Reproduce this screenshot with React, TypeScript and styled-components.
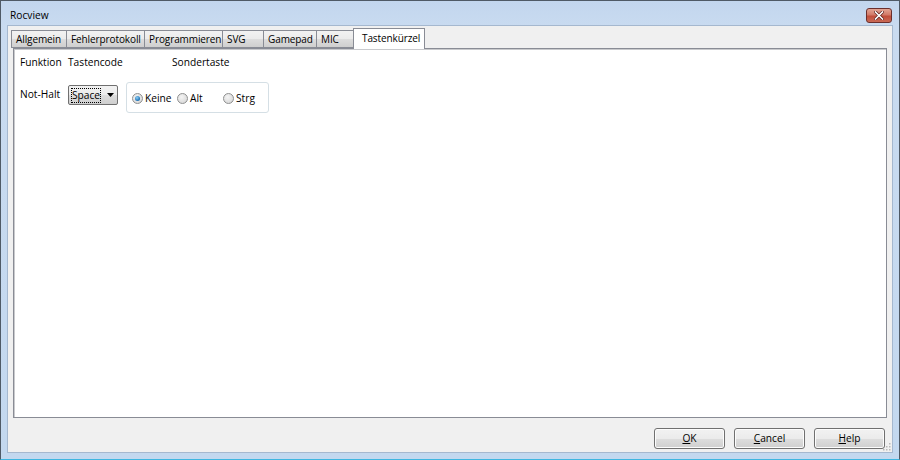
import React from "react";
import styled, { createGlobalStyle } from "styled-components";

const Global = createGlobalStyle`
  html, body { margin: 0; padding: 0; background: #fff; }
  body { font-family: "Open Sans", "Noto Sans", sans-serif; font-size: 10px; color: #000; }
`;

const Window = styled.div`
  width: 900px;
  height: 460px;
  box-sizing: border-box;
  border: 1px solid #4f5a66;
  border-bottom-color: #3fb6e0;
  background: linear-gradient(180deg, #c2d6ee 0px, #c9dbf0 26px, #c3d8ef 100%);
  display: flex;
  flex-direction: column;
  overflow: hidden;
`;

const TitleBar = styled.div`
  height: 24px;
  display: flex;
  align-items: flex-start;
  justify-content: space-between;
  padding: 0 7px 0 9px;
  flex: none;
`;

const Title = styled.span`
  font-size: 10.2px;
  line-height: 14px;
  margin-top: 7px;
  color: #000;
`;

const CloseButton = styled.div`
  width: 26px;
  height: 15px;
  margin-top: 7px;
  border: 1px solid #6b2f2c;
  border-radius: 3px;
  box-sizing: border-box;
  background: linear-gradient(180deg, #e3a594 0%, #d27a68 45%, #c14e3a 55%, #c96a56 100%);
  display: flex;
  align-items: center;
  justify-content: center;
`;

const Client = styled.div`
  flex: 1;
  margin: 0 6px 6px 6px;
  background: #f0f0f0;
  border: 1px solid #a5b8cf;
  display: flex;
  flex-direction: column;
  padding: 1px 5px 3px 5px;
  position: relative;
`;

const TabStrip = styled.div`
  display: flex;
  align-items: flex-end;
  height: 21px;
  margin-left: -2px;
  position: relative;
  z-index: 2;
`;

const Tab = styled.div<{ $w: number; $active?: boolean }>`
  width: ${(p) => p.$w}px;
  box-sizing: border-box;
  height: ${(p) => (p.$active ? 21 : 18)}px;
  margin-bottom: ${(p) => (p.$active ? -1 : 0)}px;
  border: 1px solid #898c95;
  border-bottom: ${(p) => (p.$active ? "none" : "1px solid #898c95")};
  margin-right: -1px;
  padding: ${(p) => (p.$active ? "2px 0 0 8px" : "0 0 0 4px")};
  background: ${(p) =>
    p.$active ? "#fff" : "linear-gradient(180deg, #f2f2f2 0%, #ebebeb 50%, #dddddd 51%, #cfcfcf 100%)"};
  display: flex;
  align-items: ${(p) => (p.$active ? "flex-start" : "center")};
  white-space: nowrap;
  font-size: 10px;
  letter-spacing: -0.1px;
  line-height: 15px;
`;

const Panel = styled.div`
  flex: 1;
  background: #fff;
  border: 1px solid #898c95;
  box-shadow: inset 1px 1px 0 #c9cacd;
  padding: 6px 6px;
  display: flex;
  flex-direction: column;
  gap: 12px;
`;

const Row = styled.div<{ $cols: string; $align?: string }>`
  display: grid;
  grid-template-columns: ${(p) => p.$cols};
  align-items: ${(p) => p.$align || "center"};
`;

const Label = styled.span<{ $top?: number }>`
  font-size: 10.2px;
  line-height: 15px;
  white-space: nowrap;
  margin-top: ${(p) => p.$top || 0}px;
`;

const Combo = styled.div`
  width: 50px;
  height: 20px;
  margin-top: 3px;
  box-sizing: border-box;
  border: 1px solid #707070;
  border-radius: 2px;
  background: linear-gradient(180deg, #f2f2f2 0%, #ebebeb 50%, #dddddd 51%, #cfcfcf 100%);
  display: flex;
  align-items: center;
  padding: 0 0 0 2px;
  gap: 6px;
`;

const FocusText = styled.span`
  outline: 1px dotted #000;
  outline-offset: -1px;
  padding: 0 1px;
  line-height: 15px;
  font-size: 10.2px;
`;

const Group = styled.div`
  width: 143px;
  height: 31px;
  box-sizing: border-box;
  border: 1px solid #d5dfe5;
  border-radius: 3px;
  background: #fff;
  display: flex;
  align-items: center;
  padding: 2px 0 0 5px;
`;

const RadioItem = styled.label<{ $w: number }>`
  width: ${(p) => p.$w}px;
  display: flex;
  align-items: center;
  gap: 2px;
  font-size: 10.2px;
  line-height: 15px;
`;

const RadioCircle = styled.span<{ $checked?: boolean }>`
  width: 11px;
  height: 11px;
  border-radius: 50%;
  box-sizing: border-box;
  border: 1px solid #8e8f8f;
  background: radial-gradient(circle at 40% 35%, #f4f4f4 0%, #dcdcdc 70%, #cfcfcf 100%);
  display: flex;
  align-items: center;
  justify-content: center;
  &::after {
    content: "";
    display: ${(p) => (p.$checked ? "block" : "none")};
    width: 5px;
    height: 5px;
    border-radius: 50%;
    background: radial-gradient(circle at 40% 35%, #8fd0f5 0%, #1a6fb4 70%, #0d4f8a 100%);
  }
`;

const Footer = styled.div`
  display: flex;
  justify-content: flex-end;
  gap: 9px;
  padding: 10px 2px 0 0;
`;

const Button = styled.div`
  width: 71px;
  height: 21px;
  box-sizing: border-box;
  border: 1px solid #707070;
  border-radius: 3px;
  background: linear-gradient(180deg, #f2f2f2 0%, #ebebeb 50%, #dddddd 51%, #cfcfcf 100%);
  box-shadow: inset 0 0 0 1px #fcfcfc;
  display: flex;
  align-items: center;
  justify-content: center;
  font-size: 10.2px;
  line-height: 15px;
  u { text-decoration: underline; text-underline-offset: 1px; }
`;

const Grip = styled.svg`
  position: absolute;
  right: 1px;
  bottom: 1px;
`;

const tabs: [string, number][] = [
  ["Allgemein", 56],
  ["Fehlerprotokoll", 79],
  ["Programmieren", 79],
  ["SVG", 42],
  ["Gamepad", 54],
  ["MIC", 38],
];

export default function App() {
  return (
    <>
      <Global />
      <Window>
        <TitleBar>
          <Title>Rocview</Title>
          <CloseButton>
            <svg width="10" height="9" viewBox="0 0 10 9">
              <path d="M1.5 1 L8.5 8 M8.5 1 L1.5 8" stroke="#5a1f1a" strokeWidth="3" strokeLinecap="square" />
              <path d="M1.5 1 L8.5 8 M8.5 1 L1.5 8" stroke="#fff" strokeWidth="1.6" strokeLinecap="square" />
            </svg>
          </CloseButton>
        </TitleBar>
        <Client>
          <TabStrip>
            {tabs.map(([t, w]) => (
              <Tab key={t} $w={w}>
                {t}
              </Tab>
            ))}
            <Tab $w={72} $active>
              Tastenkürzel
            </Tab>
          </TabStrip>
          <Panel>
            <Row $cols="48px 104px auto">
              <Label>Funktion</Label>
              <Label>Tastencode</Label>
              <Label>Sondertaste</Label>
            </Row>
            <Row $cols="48px 58px auto" $align="start">
              <Label $top={5}>Not-Halt</Label>
              <Combo>
                <FocusText>Space</FocusText>
                <svg width="7" height="4" viewBox="0 0 7 4">
                  <path d="M0 0 H7 L3.5 4 Z" fill="#000" />
                </svg>
              </Combo>
              <Group>
                <RadioItem $w={45}>
                  <RadioCircle $checked />
                  Keine
                </RadioItem>
                <RadioItem $w={46}>
                  <RadioCircle />
                  Alt
                </RadioItem>
                <RadioItem $w={40}>
                  <RadioCircle />
                  Strg
                </RadioItem>
              </Group>
            </Row>
          </Panel>
          <Footer>
            <Button>
              <u>O</u>K
            </Button>
            <Button>
              <u>C</u>ancel
            </Button>
            <Button>
              <u>H</u>elp
            </Button>
          </Footer>
          <Grip width="9" height="9" viewBox="0 0 9 9">
            {[
              [7, 1],
              [7, 4],
              [4, 4],
              [7, 7],
              [4, 7],
              [1, 7],
            ].map(([x, y]) => (
              <rect key={`${x}-${y}`} x={x} y={y} width="1.5" height="1.5" fill="#b8b8b8" />
            ))}
          </Grip>
        </Client>
      </Window>
    </>
  );
}
